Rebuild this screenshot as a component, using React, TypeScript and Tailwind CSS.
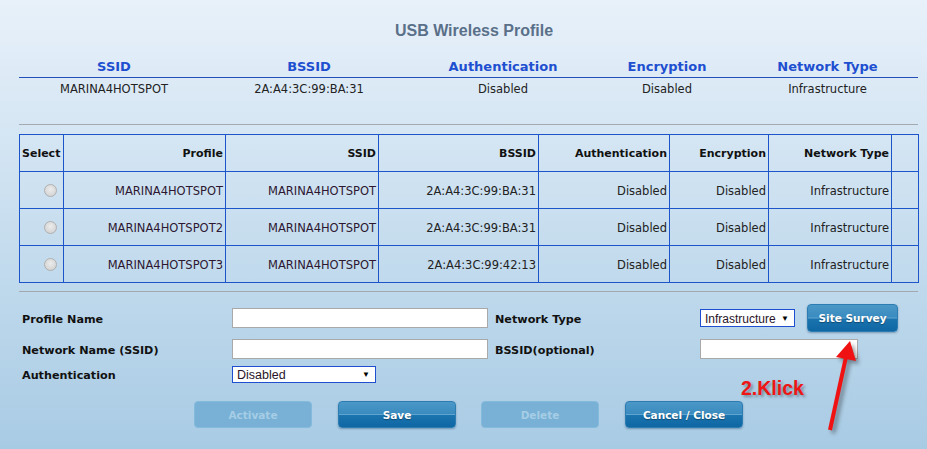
import React from 'react';

const topCols = ['SSID', 'BSSID', 'Authentication', 'Encryption', 'Network Type'];
const topRow = ['MARINA4HOTSPOT', '2A:A4:3C:99:BA:31', 'Disabled', 'Disabled', 'Infrastructure'];

const profiles = [
  { profile: 'MARINA4HOTSPOT', ssid: 'MARINA4HOTSPOT', bssid: '2A:A4:3C:99:BA:31' },
  { profile: 'MARINA4HOTSPOT2', ssid: 'MARINA4HOTSPOT', bssid: '2A:A4:3C:99:BA:31' },
  { profile: 'MARINA4HOTSPOT3', ssid: 'MARINA4HOTSPOT', bssid: '2A:A4:3C:99:42:13' },
];

const cell = 'border-l border-t border-[#1c55c9] flex items-center justify-end pr-[2px] pt-[3px]';

const Button: React.FC<{ label: string; disabled?: boolean; className?: string }> = ({ label, disabled, className }) => (
  <div
    className={
      'h-[27px] rounded-[4px] flex items-center justify-center pt-[2px] text-[10.5px] font-bold ' +
      (disabled
        ? 'bg-[#78b1d5] text-[#a6cde6] border border-[#84badb] '
        : 'text-white border border-[#2d7db3] shadow-[0_1px_2px_rgba(0,40,80,0.35)] bg-[linear-gradient(to_bottom,#4b98c8_0%,#3a8bbf_46%,#5ea5d1_50%,#1b74ae_54%,#0e66a3_100%)] [text-shadow:0_1px_1px_rgba(0,0,0,0.35)] ') +
      (className || '')
    }
  >
    {label}
  </div>
);

const Select: React.FC<{ value: string; className?: string }> = ({ value, className }) => (
  <div
    className={
      'bg-white border border-[#1d4fd0] flex items-center justify-between pl-[4px] pr-[5px] pt-[1px] font-["Liberation_Sans",sans-serif] font-normal text-[12px] text-[#2a1428] ' +
      (className || '')
    }
  >
    <span>{value}</span>
    <span className="text-[8px] text-black">▼</span>
  </div>
);

export default function App() {
  return (
    <div className="relative w-full min-h-[449px] overflow-hidden bg-[linear-gradient(to_bottom,#e8f1fa,#a8cbe4)] font-['DejaVu_Sans',sans-serif]">
      <div className="pl-[19px]">
        <div className="w-[899px]">
          <div className="pt-[21px] pl-[11px] text-center leading-[20px] text-[16px] font-bold text-[#5a7089] font-['Liberation_Sans',sans-serif]">
            USB Wireless Profile
          </div>

          {/* summary */}
          <div className="grid grid-cols-[190px_200px_188px_140px_181px] border-b border-[#2250b8] pt-[16px] leading-[20px] text-[13px] font-bold text-[#1d4fd0] text-center">
            {topCols.map(c => (
              <div key={c}>{c}</div>
            ))}
          </div>
          <div className="grid grid-cols-[190px_200px_188px_140px_181px] pt-[4px] leading-[14px] text-[11.5px] text-[#222] text-center">
            {topRow.map((c, i) => (
              <div key={i}>{c}</div>
            ))}
          </div>

          <div className="mt-[28px] h-px bg-[#a3a9ae]" />

          {/* profile table */}
          <div className="mt-[9px] w-[900px] grid grid-cols-[44px_162px_153px_160px_131px_99px_123px_27px] auto-rows-[37px] border-r border-b border-[#1c55c9] text-[11.5px]">
            <div className={cell + ' !justify-start pl-[2px] font-bold text-[11px] text-[#111]'}>Select</div>
            {['Profile', 'SSID', 'BSSID', 'Authentication', 'Encryption', 'Network Type'].map(h => (
              <div key={h} className={cell + ' font-bold text-[11px] text-[#111]'}>{h}</div>
            ))}
            <div className={cell} />
            {profiles.map(p => (
              <React.Fragment key={p.profile}>
                <div className={cell + ' pr-[6px] !pt-0'}>
                  <div className="w-[13px] h-[13px] rounded-full border border-[#b0b0b0] bg-[radial-gradient(circle_at_50%_40%,#ececec,#cdcdcd)]" />
                </div>
                <div className={cell + ' text-[#2d1730]'}>{p.profile}</div>
                <div className={cell + ' text-[#2d1730]'}>{p.ssid}</div>
                <div className={cell + ' text-[#222]'}>{p.bssid}</div>
                <div className={cell + ' text-[#222]'}>Disabled</div>
                <div className={cell + ' text-[#222]'}>Disabled</div>
                <div className={cell + ' text-[#222]'}>Infrastructure</div>
                <div className={cell} />
              </React.Fragment>
            ))}
          </div>

          <div className="mt-[8px] h-px bg-[#a3a9ae]" />

          {/* form */}
          <div className="text-[11.2px] font-bold text-[#111]">
            <div className="mt-[12px] h-[28px] flex items-center">
              <div className="w-[213px] pl-[3px] pt-[4px]">Profile Name</div>
              <div className="w-[256px] h-[20px] bg-white border border-[#a9a9a9]" />
              <div className="w-[212px] pl-[7px] pt-[4px]">Network Type</div>
              <Select value="Infrastructure" className="w-[95px] h-[18px]" />
              <Button label="Site Survey" className="ml-[12px] w-[91px] !h-[28px]" />
            </div>
            <div className="mt-[7px] h-[20px] flex items-center">
              <div className="w-[213px] pl-[3px] pt-[4px]">Network Name (SSID)</div>
              <div className="w-[256px] h-[20px] bg-white border border-[#a9a9a9]" />
              <div className="w-[212px] pl-[7px] pt-[4px]">BSSID(optional)</div>
              <div className="w-[158px] h-[20px] bg-white border border-[#a9a9a9]" />
            </div>
            <div className="mt-[7px] h-[17px] flex items-center">
              <div className="w-[213px] pl-[3px] pt-[4px]">Authentication</div>
              <Select value="Disabled" className="w-[144px] h-[17px] !text-[12.5px]" />
            </div>
          </div>

          <div className="mt-[18px] flex pl-[175px]">
            <Button label="Activate" disabled className="w-[118px]" />
            <Button label="Save" className="w-[118px] ml-[26px]" />
            <Button label="Delete" disabled className="w-[118px] ml-[25px]" />
            <Button label="Cancel / Close" className="w-[118px] ml-[26px]" />
          </div>
        </div>
      </div>

      {/* annotation */}
      <div className="absolute left-[741px] top-[379px] leading-none text-[19.5px] font-bold text-[#ee1515] font-['Liberation_Sans',sans-serif] [text-shadow:2px_2px_3px_rgba(0,0,0,0.35)]">
        2.Klick
      </div>
      <svg
        className="absolute left-[810px] top-[330px] drop-shadow-[3px_3px_2px_rgba(0,0,0,0.4)]"
        width="80"
        height="110"
        viewBox="0 0 80 110"
      >
        <line x1="20" y1="100" x2="36" y2="27" stroke="#f01212" strokeWidth="4" />
        <polygon points="40,11 26,27 46,31" fill="#f01212" />
      </svg>
    </div>
  );
}
